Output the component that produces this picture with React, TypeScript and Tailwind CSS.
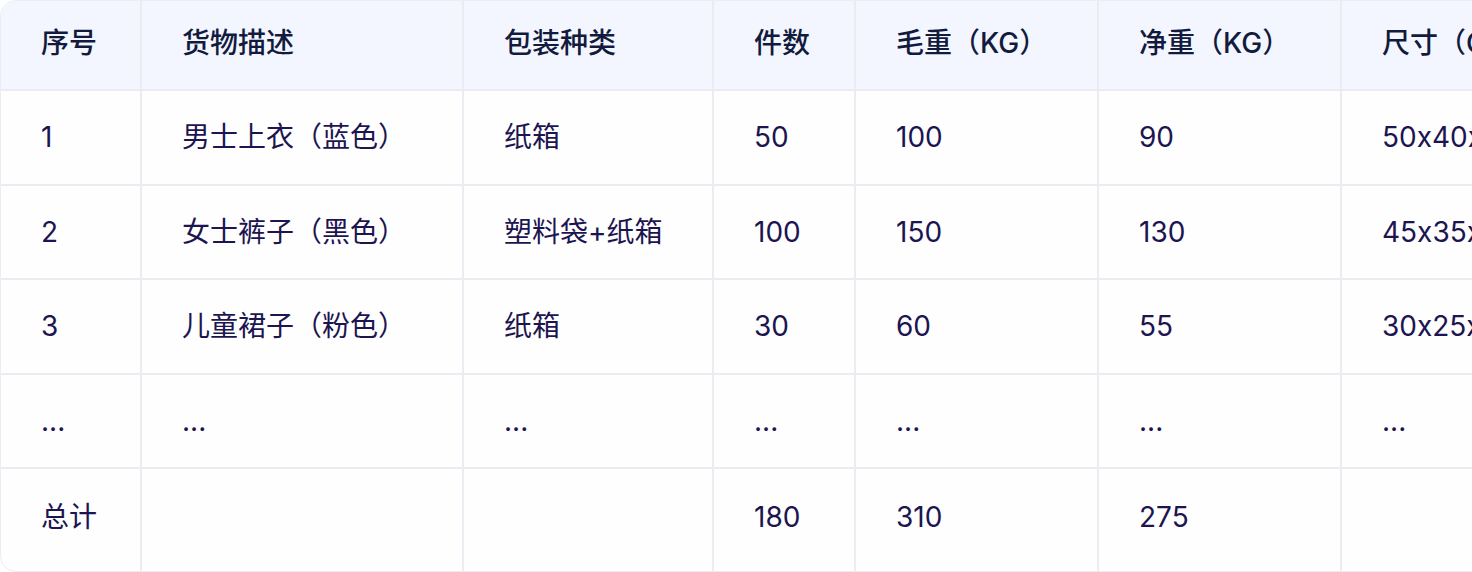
const headers = ["序号", "货物描述", "包装种类", "件数", "毛重（KG）", "净重（KG）", "尺寸（CM）", "体积（CBM）"];

const widths = ["w-[140px]", "w-[322px]", "w-[250px]", "w-[142px]", "w-[243px]", "w-[243px]", "w-[243px]", "w-[243px]"];

const rows = [
  ["1", "男士上衣（蓝色）", "纸箱", "50", "100", "90", "50x40x30", "0.06"],
  ["2", "女士裤子（黑色）", "塑料袋+纸箱", "100", "150", "130", "45x35x25", "0.04"],
  ["3", "儿童裙子（粉色）", "纸箱", "30", "60", "55", "30x25x20", "0.015"],
  ["...", "...", "...", "...", "...", "...", "...", "..."],
  ["总计", "", "", "180", "310", "275", "", ""],
];

export default function App() {
  return (
    <div
      className="w-[1472px] h-[572px] overflow-hidden bg-white [font-feature-settings:'calt'_0]"
      style={{ fontFamily: 'Inter, "Noto Sans CJK SC", sans-serif' }}
    >
      <div className="w-[2000px] h-[572px] rounded-[16px] border border-[#ececf2] overflow-hidden bg-[#fefeff]">
        <table className="border-collapse table-fixed text-[28px]">
          <thead>
            <tr className="bg-[#f3f6fe] h-[89px]">
              {headers.map((h, i) => (
                <th
                  key={h}
                  className={`${widths[i]} text-left font-medium text-[#121b3d] pl-[40px] pb-[4px] border-r-2 border-b-2 border-[#ebebf1]`}
                >
                  {h}
                </th>
              ))}
            </tr>
          </thead>
          <tbody>
            {rows.map((row, r) => (
              <tr key={r} className={r === rows.length - 1 ? "h-[104px] align-top" : "h-[94.5px]"}>
                {row.map((cell, i) => (
                  <td
                    key={i}
                    className={`${widths[i]} text-left text-[#1c1550] pl-[40px] border-r-2 border-[#ebebf1] ${r === rows.length - 1 ? "pt-[27px]" : "border-b-2"}`}
                  >
                    {cell}
                  </td>
                ))}
              </tr>
            ))}
          </tbody>
        </table>
      </div>
    </div>
  );
}
